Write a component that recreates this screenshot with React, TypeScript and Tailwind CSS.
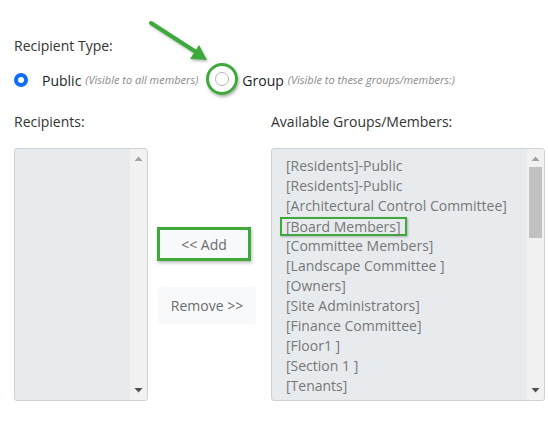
import React from "react";

const items = [
  "[Residents]-Public",
  "[Residents]-Public",
  "[Architectural Control Committee]",
  "[Board Members]",
  "[Committee Members]",
  "[Landscape Committee ]",
  "[Owners]",
  "[Site Administrators]",
  "[Finance Committee]",
  "[Floor1 ]",
  "[Section 1 ]",
  "[Tenants]",
  "[TEST group]",
];

function UpArrow() {
  return (
    <svg width="9" height="6" viewBox="0 0 9 6">
      <polygon points="4.5,0.5 8.5,5 0.5,5" fill="#a3a3a3" />
    </svg>
  );
}
function DownArrow() {
  return (
    <svg width="9" height="6" viewBox="0 0 9 6">
      <polygon points="0.5,1 8.5,1 4.5,5.5" fill="#505050" />
    </svg>
  );
}

export default function App() {
  return (
    <div
      className="relative w-[548px] h-[431px] bg-white overflow-hidden"
      style={{ fontFamily: '"Open Sans", "Noto Sans", sans-serif' }}
    >
      <div className="pl-[14px] pt-[36px]">
        <div className="text-[14px] leading-[20px] text-[#333]">Recipient Type:</div>
        <div className="flex items-center h-[22px] mt-[13px]">
          <span className="w-[14px] h-[14px] rounded-full bg-[#0d6efd] flex items-center justify-center">
            <span className="w-[6px] h-[6px] rounded-full bg-white" />
          </span>
          <span className="ml-[14px] text-[14px] text-[#212529]">Public</span>
          <span className="ml-[4px] text-[11px] italic text-[#8a8a8a]">(Visible to all members)</span>
          <span className="relative ml-[17px] w-[14px] h-[14px] rounded-full border border-[#b5b5b5] bg-white -mt-[2px]">
            <span className="absolute left-[-10px] top-[-10px] w-[32px] h-[32px] rounded-full border-[3px] border-[#3ea83a] shadow-[1px_2px_3px_rgba(0,0,0,0.3)]" />
          </span>
          <span className="ml-[13px] text-[14px] text-[#212529]">Group</span>
          <span className="ml-[4px] text-[11px] italic text-[#8a8a8a]">(Visible to these groups/members:)</span>
        </div>
        <div className="flex mt-[21px] text-[14px] leading-[20px] text-[#333]">
          <div className="w-[257px]">Recipients:</div>
          <div>Available Groups/Members:</div>
        </div>
        <div className="flex mt-[16px]">
          <div className="w-[134px] h-[253px] border border-[#cfd2d5] rounded-[3px] bg-[#e8ebee] flex overflow-hidden">
            <div className="flex-1" />
            <div className="w-[17px] bg-[#f1f1f1] flex flex-col items-center justify-between pt-[7px] pb-[7px]">
              <UpArrow />
              <DownArrow />
            </div>
          </div>
          <div className="w-[123px] flex flex-col pl-[9px] pt-[79px]">
            <div className="w-[94px] h-[34px] border-[3px] border-[#3ea83a] bg-[#f8f9fa] flex items-center justify-center text-[14px] text-[#6c6c6c] shadow-[1px_2px_3px_rgba(0,0,0,0.25)]">
              &lt;&lt; Add
            </div>
            <div className="ml-[1px] mt-[26px] w-[98px] h-[37px] rounded-[4px] bg-[#f8f9fb] flex items-center justify-center text-[14px] text-[#6c6c6c]">
              Remove &gt;&gt;
            </div>
          </div>
          <div className="w-[274px] h-[253px] border border-[#cfd2d5] rounded-[3px] bg-[#e8ebee] flex overflow-hidden">
            <div className="flex-1 pl-[14px] pt-[7px] overflow-hidden">
              {items.map((t, i) => (
                <div key={i} className="h-[20px] text-[14px] leading-[20px] text-[#777]">
                  {i === 3 ? (
                    <span className="inline-block align-top -ml-[6px] px-[4px] border-[2px] border-[#3ea83a] leading-[15px] mt-[1px] shadow-[1px_1px_2px_rgba(0,0,0,0.25)]">
                      {t}
                    </span>
                  ) : (
                    t
                  )}
                </div>
              ))}
            </div>
            <div className="w-[17px] bg-[#f1f1f1] flex flex-col items-center pt-[7px] pb-[7px]">
              <UpArrow />
              <div className="mt-[5px] w-[13px] h-[71px] bg-[#c1c1c1]" />
              <div className="flex-1" />
              <DownArrow />
            </div>
          </div>
        </div>
      </div>
      <svg className="absolute left-0 top-0" width="548" height="431" viewBox="0 0 548 431">
        <defs>
          <filter id="sh" x="-20%" y="-20%" width="140%" height="140%">
            <feDropShadow dx="1" dy="1.5" stdDeviation="1" floodColor="#000" floodOpacity="0.3" />
          </filter>
        </defs>
        <g filter="url(#sh)">
          <line x1="151" y1="23" x2="196" y2="52" stroke="#3ea83a" strokeWidth="4" strokeLinecap="round" />
          <polygon points="207,60 190,59 199,45" fill="#3ea83a" />
        </g>
      </svg>
    </div>
  );
}
